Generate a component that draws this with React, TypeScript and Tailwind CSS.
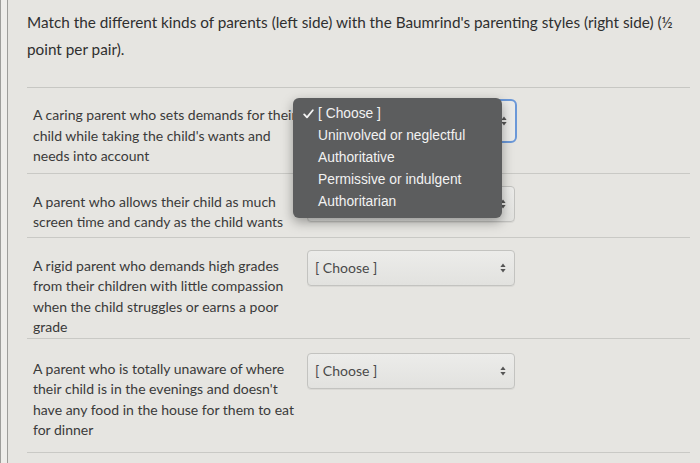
import React from 'react';

interface Pair {
  lines: string[];
  rowClass: string;
}

const pairs: Pair[] = [
  {
    lines: ['A caring parent who sets demands for their', "child while taking the child's wants and", 'needs into account'],
    rowClass: 'pt-[11px] pb-[6px]',
  },
  {
    lines: ['A parent who allows their child as much', 'screen time and candy as the child wants'],
    rowClass: 'pt-[12px] pb-[4px]',
  },
  {
    lines: ['A rigid parent who demands high grades', 'from their children with little compassion', 'when the child struggles or earns a poor', 'grade'],
    rowClass: 'pt-[12px] pb-[0px]',
  },
  {
    lines: ['A parent who is totally unaware of where', "their child is in the evenings and doesn't", 'have any food in the house for them to eat', 'for dinner'],
    rowClass: 'pt-[14px] pb-[11px]',
  },
];

const options = ['[ Choose ]', 'Uninvolved or neglectful', 'Authoritative', 'Permissive or indulgent', 'Authoritarian'];

const Arrows = () => (
  <svg width="6" height="10" viewBox="0 0 6 10" className="text-[#555]">
    <path d="M3 0.5 L5.6 4 H0.4 Z" fill="currentColor" />
    <path d="M3 9.5 L5.6 6 H0.4 Z" fill="currentColor" />
  </svg>
);

const Check = () => (
  <svg width="11" height="10" viewBox="0 0 11 10">
    <path d="M1.2 5.4 L4 8.4 L9.8 1.2" fill="none" stroke="#f4f4f4" strokeWidth="1.8" strokeLinecap="round" strokeLinejoin="round" />
  </svg>
);

const Select = ({ focused }: { focused?: boolean }) => (
  <div
    className={
      focused
        ? 'w-[210px] h-[44px] rounded-[6px] border-2 border-[#6b98d8] bg-[#ebebe9] flex items-center justify-between pl-[7px] pr-[8px]'
        : 'w-[208px] h-[36px] rounded-[4px] border border-[#c3c3c0] bg-gradient-to-b from-[#ececea] to-[#e2e2df] flex items-center justify-between pl-[7px] pr-[8px] shadow-[0_1px_0_rgba(0,0,0,0.05)]'
    }
  >
    <span className="text-[14px] text-[#4a4a4a]">[ Choose ]</span>
    <Arrows />
  </div>
);

export default function App() {
  return (
    <div
      className="relative w-[700px] h-[463px] overflow-hidden bg-[#e6e5e1] flex text-[#363636]"
      style={{ fontFamily: 'Lato, "Open Sans", sans-serif' }}
    >
      <div className="w-[8px] h-full bg-[#eeedea] border-l border-r border-[#9d9d9a]" />

      <div className="flex-1 pl-[19px] pr-[10px]">
        <p className="pt-[9px] text-[15.3px] leading-[27px] text-[#2f2f2f] whitespace-nowrap">
          Match the different kinds of parents (left side) with the Baumrind's parenting styles (right side) (½
          <br />
          point per pair).
        </p>

        <div className="mt-[24px] border-t border-[#c7c7c3]">
          {pairs.map((pair, i) => (
            <div key={i} className={`flex items-start pl-[6px] border-b border-[#c9c9c5] ${pair.rowClass}`}>
              <div className="w-[256px] mt-[6px] text-[14px] leading-[20.5px] text-[#3a3a3a] whitespace-nowrap">
                {pair.lines.map((l) => (
                  <div key={l}>{l}</div>
                ))}
              </div>
              <div className="ml-[18px]">
                <Select focused={i === 0} />
              </div>
            </div>
          ))}
        </div>
      </div>

      <div
        className="absolute left-[293px] top-[98px] w-[209px] h-[120px] rounded-[6px] bg-[#5c5d5e] shadow-[0_4px_12px_rgba(0,0,0,0.35)] pt-[5px]"
        style={{ fontFamily: '"Liberation Sans", Arial, sans-serif' }}
      >
        {options.map((o, i) => (
          <div key={o} className="flex items-center h-[22px] text-[13.8px] text-[#f2f2f2]">
            <span className="w-[25px] pl-[10px] flex items-center">{i === 0 ? <Check /> : null}</span>
            <span>{o}</span>
          </div>
        ))}
      </div>
    </div>
  );
}
